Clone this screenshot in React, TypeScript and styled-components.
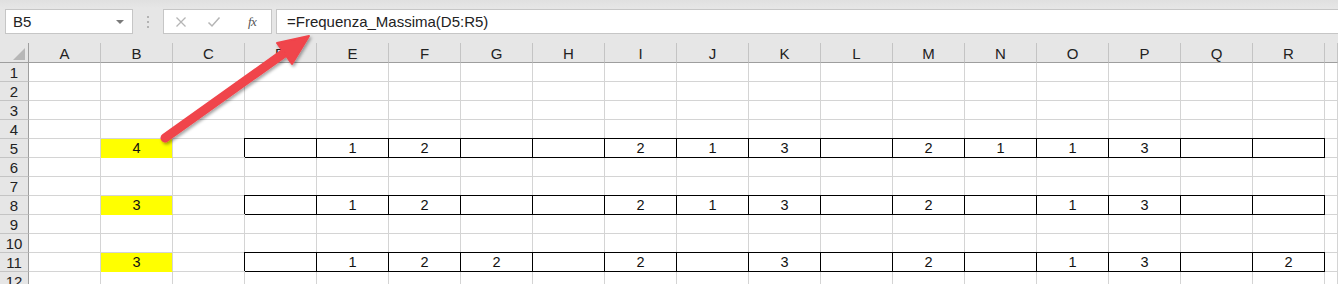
import React from 'react';
import styled, { createGlobalStyle } from 'styled-components';

const GlobalStyle = createGlobalStyle`
  html, body {
    margin: 0;
    padding: 0;
    background: #fff;
  }
  body {
    font-family: 'Liberation Sans', Arial, sans-serif;
  }
`;

const COLS = ['A', 'B', 'C', 'D', 'E', 'F', 'G', 'H', 'I', 'J', 'K', 'L', 'M', 'N', 'O', 'P', 'Q', 'R'];
const BOXED = COLS.slice(3);

// values for D..R in the boxed rows
const ROWS: Record<number, { b: string; cells: string[] }> = {
  5: { b: '4', cells: ['', '1', '2', '', '', '2', '1', '3', '', '2', '1', '1', '3', '', ''] },
  8: { b: '3', cells: ['', '1', '2', '', '', '2', '1', '3', '', '2', '', '1', '3', '', ''] },
  11: { b: '3', cells: ['', '1', '2', '2', '', '2', '', '3', '', '2', '', '1', '3', '', '2'] },
};

const Window = styled.div`
  position: relative;
  width: 1338px;
  height: 284px;
  overflow: hidden;
  background: #fff;
`;

const FormulaBar = styled.div`
  height: 43px;
  box-sizing: border-box;
  padding: 9px 0 0 5px;
  display: flex;
  align-items: flex-start;
  background: linear-gradient(#e0e0e0 0px, #e6e6e6 8px, #e6e6e6 100%);
`;

const NameBox = styled.div`
  position: relative;
  width: 128px;
  height: 25px;
  box-sizing: border-box;
  border: 1px solid #c6c6c6;
  background: #fff;
  display: flex;
  align-items: center;
  padding-left: 7px;
  font-size: 15px;
  color: #222;
`;

const Caret = styled.span`
  position: absolute;
  right: 8px;
  top: 10px;
  width: 0;
  height: 0;
  border-left: 4px solid transparent;
  border-right: 4px solid transparent;
  border-top: 4px solid #7a7a7a;
`;

const Grip = styled.div`
  width: 30px;
  height: 25px;
  display: flex;
  flex-direction: column;
  align-items: center;
  justify-content: center;
  gap: 3px;
`;

const GripDot = styled.span`
  width: 2px;
  height: 2px;
  background: #b3b3b3;
`;

const ButtonBox = styled.div`
  width: 109px;
  height: 25px;
  box-sizing: border-box;
  border: 1px solid #c6c6c6;
  background: #fff;
  display: flex;
  align-items: center;
  padding-left: 11px;
  gap: 0;
`;

const IconSlot = styled.span<{ $w: number }>`
  width: ${({ $w }) => $w}px;
  display: flex;
  align-items: center;
  justify-content: flex-start;
`;

const Fx = styled.span`
  font-family: 'Liberation Serif', 'Times New Roman', serif;
  font-style: italic;
  font-size: 13px;
  color: #555;
  letter-spacing: -0.5px;
`;

const FormulaInput = styled.div`
  flex: 1;
  margin-left: 4px;
  height: 25px;
  box-sizing: border-box;
  border: 1px solid #c6c6c6;
  border-right: none;
  background: #fff;
  display: flex;
  align-items: center;
  padding-left: 10px;
  font-size: 15px;
  color: #222;
`;

const Sheet = styled.div`
  display: grid;
  grid-template-columns: 29px repeat(18, 72px) 1fr;
  grid-template-rows: 20px repeat(12, 19px);
  font-size: 14.5px;
  color: #111;
`;

const Corner = styled.div`
  background: #e6e6e6;
  box-sizing: border-box;
  border-right: 1px solid #9e9e9e;
  border-bottom: 1px solid #9e9e9e;
  display: flex;
  align-items: flex-end;
  justify-content: flex-end;
  padding: 0 3px 2px 0;
`;

const CornerMark = styled.span`
  width: 0;
  height: 0;
  border-left: 12px solid transparent;
  border-bottom: 12px solid #b7b7b7;
`;

const ColHead = styled.div`
  background: #e6e6e6;
  box-sizing: border-box;
  border-right: 1px solid #c4c4c4;
  border-bottom: 1px solid #9e9e9e;
  display: flex;
  align-items: center;
  justify-content: center;
  font-size: 15px;
  color: #222;
  padding-top: 1px;
`;

const RowHead = styled.div`
  background: #e6e6e6;
  box-sizing: border-box;
  border-right: 1px solid #9e9e9e;
  border-bottom: 1px solid #c4c4c4;
  display: flex;
  align-items: center;
  justify-content: center;
  font-size: 15px;
  color: #222;
`;

const Cell = styled.div<{ $boxed?: boolean; $fill?: string }>`
  box-sizing: border-box;
  border-right: 1px solid ${({ $boxed }) => ($boxed ? '#000' : '#d4d4d4')};
  border-bottom: 1px solid ${({ $boxed, $fill }) => ($boxed ? '#000' : $fill || '#d4d4d4')};
  background: ${({ $fill }) => $fill || 'transparent'};
  box-shadow: ${({ $boxed }) => ($boxed ? '-1px -1px 0 0 #000, 0 -1px 0 0 #000' : 'none')};
  display: flex;
  align-items: center;
  justify-content: center;
  line-height: 1;
`;

const Arrow = styled.svg`
  position: absolute;
  left: 0;
  top: 0;
  pointer-events: none;
`;

const CrossIcon = () => (
  <svg width="12" height="12" viewBox="0 0 12 12">
    <path d="M1.5 1.5 L10.5 10.5 M10.5 1.5 L1.5 10.5" stroke="#b5b5b5" strokeWidth="1.3" fill="none" />
  </svg>
);

const CheckIcon = () => (
  <svg width="14" height="12" viewBox="0 0 14 12">
    <path d="M1.5 6.5 L5 10 L12.5 1.5" stroke="#b5b5b5" strokeWidth="1.5" fill="none" />
  </svg>
);

const App = () => {
  const rows = Array.from({ length: 12 }, (_, i) => i + 1);

  return (
    <Window>
      <GlobalStyle />
      <FormulaBar>
        <NameBox>
          B5
          <Caret />
        </NameBox>
        <Grip>
          <GripDot />
          <GripDot />
          <GripDot />
        </Grip>
        <ButtonBox>
          <IconSlot $w={32}>
            <CrossIcon />
          </IconSlot>
          <IconSlot $w={41}>
            <CheckIcon />
          </IconSlot>
          <IconSlot $w={20}>
            <Fx>fx</Fx>
          </IconSlot>
        </ButtonBox>
        <FormulaInput>=Frequenza_Massima(D5:R5)</FormulaInput>
      </FormulaBar>

      <Sheet>
        <Corner>
          <CornerMark />
        </Corner>
        {COLS.map((c) => (
          <ColHead key={c}>{c}</ColHead>
        ))}
        <ColHead />
        {rows.map((r) => {
          const data = ROWS[r];
          return (
            <React.Fragment key={r}>
              <RowHead>{r}</RowHead>
              {COLS.map((c, ci) => {
                if (!data) return <Cell key={c} />;
                if (c === 'B') return <Cell key={c} $fill="#ffff00">{data.b}</Cell>;
                const bi = BOXED.indexOf(c);
                if (bi >= 0) return <Cell key={c} $boxed>{data.cells[bi]}</Cell>;
                return <Cell key={c + ci} />;
              })}
              <Cell />
            </React.Fragment>
          );
        })}
      </Sheet>

      <Arrow width="1338" height="284" viewBox="0 0 1338 284">
        <defs>
          <filter id="arrowShadow" x="-20%" y="-20%" width="140%" height="140%">
            <feDropShadow dx="1.5" dy="2" stdDeviation="1.8" floodColor="#000" floodOpacity="0.35" />
          </filter>
        </defs>
        <g filter="url(#arrowShadow)">
          <line x1="165" y1="138" x2="287" y2="51" stroke="#f0444b" strokeWidth="9" strokeLinecap="round" />
          <path d="M309 36 L277 43 L284.5 53.4 L292 64 Z" fill="#f0444b" stroke="#f0444b" strokeWidth="2" strokeLinejoin="round" />
        </g>
      </Arrow>
    </Window>
  );
};

export default App;
